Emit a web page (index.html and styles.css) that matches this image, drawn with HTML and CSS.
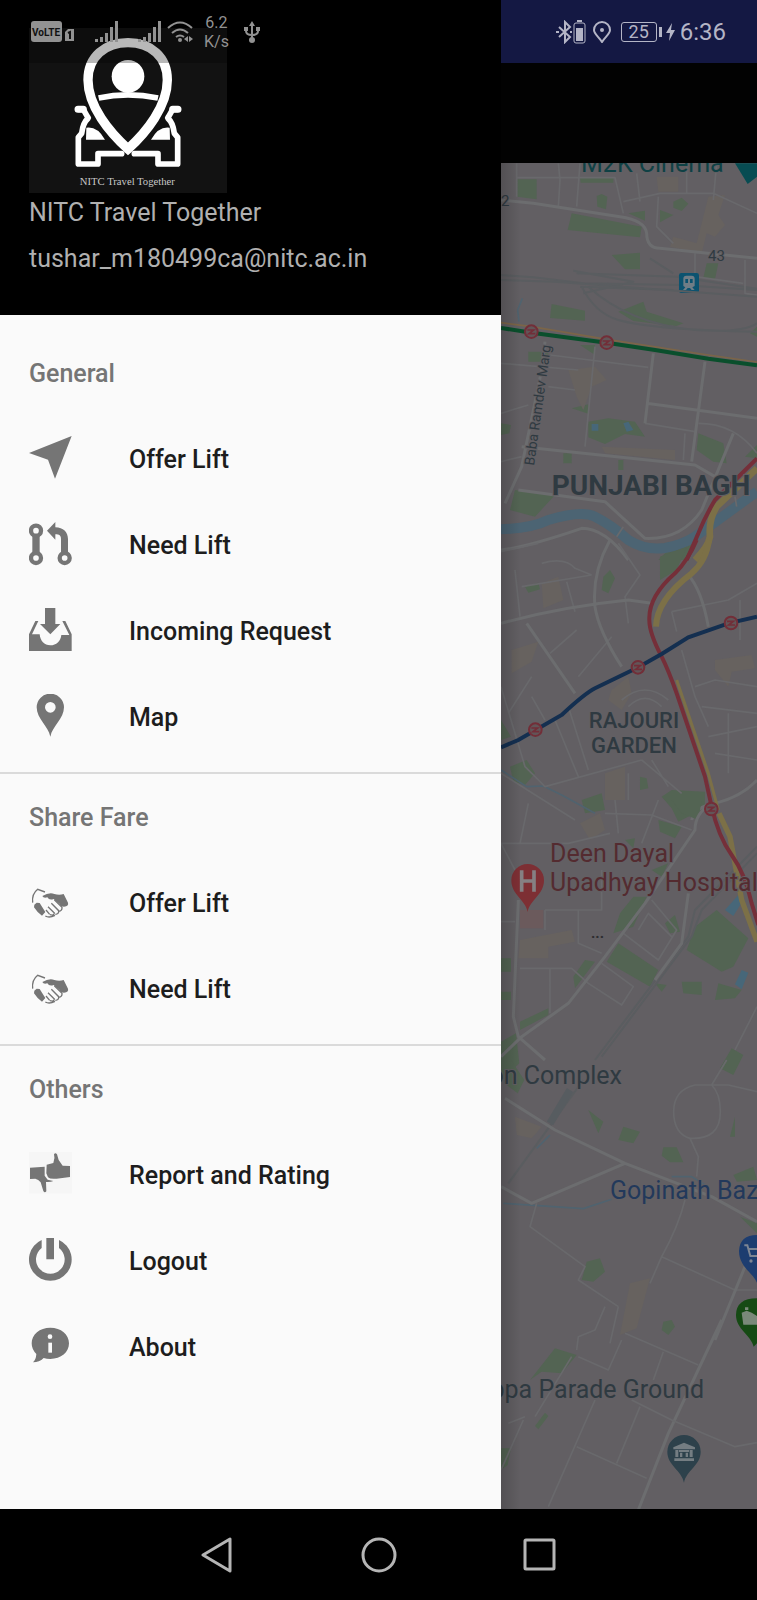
FILE: index.html
```html
<!DOCTYPE html>
<html lang="en">
<head>
<meta charset="utf-8">
<meta name="viewport" content="width=device-width, initial-scale=1">
<title>NITC Travel Together</title>
<link rel="stylesheet" href="styles.css">
</head>
<body>
<div class="screen">
  <aside class="drawer">
    <header class="profile">
      <svg class="logo" viewBox="87 84 594 495" role="img" aria-label="NITC Travel Together logo">
        <rect x="87" y="84" width="594" height="495" fill="#121212"/>
        <g fill="none" stroke="#fff" stroke-linejoin="round" stroke-linecap="round">
          <path d="M296 294Q383 275 474 294" stroke-width="17" stroke-linecap="butt"/>
          <path d="M235 328H250Q262 350 265 354Q249 368 245 400L235 412V492H294V461H365M533 328H518Q506 350 503 354Q519 368 523 400L533 412V492H474V461H403" stroke-width="17"/>
          <path d="M234 328H250M534 328H518" stroke-width="21"/>
          <path d="M384 447C330 398 264 320 264 240C264 170 316 128 384 128S502 170 502 240C502 320 438 398 384 447Z" stroke-width="28" stroke-linejoin="miter"/>
        </g>
        <circle cx="384" cy="229" r="49" fill="#fff"/>
        <path d="M259 383Q292 378 315 419H258ZM509 383Q476 378 453 419H510Z" fill="#fff"/>
        <text x="382" y="556" class="logo-text" text-anchor="middle">NITC Travel Together</text>
      </svg>
      <p class="name">NITC Travel Together</p>
      <p class="email">tushar_m180499ca@nitc.ac.in</p>
    </header>
    <nav class="menu">
      <section class="group">
        <h2 class="group-title">General</h2>
        <a class="item" href="#offer">
          <svg class="icon" viewBox="87 47 129 141"><path d="M87 98L215 47L165 175L144 118Z"/></svg>Offer Lift</a>
        <a class="item" href="#need">
          <svg class="icon" viewBox="87 304 129 141"><path d="M97 345H119V398H97ZM141 330L166 304V320C190 320 204 335 204 355V398H183V355C183 345 178 341 166 341V357Z"/><g class="ring"><circle cx="108" cy="330" r="15"/><circle cx="108" cy="412" r="15"/><circle cx="194" cy="412" r="15"/></g></svg>Need Lift</a>
        <a class="item" href="#incoming">
          <svg class="icon" viewBox="87 561 129 141"><path d="M135 561H166V609H181L151 640L120 609H135ZM87 690V640L106 600H115L96 640H119C121 660 133 673 151 673S182 660 184 642H208L187 600H196L215 640V690Z"/></svg>Incoming Request</a>
        <a class="item" href="#map">
          <svg class="icon" viewBox="87 818 129 141"><path fill-rule="evenodd" d="M151 946C145 915 110 892 110 858A41 41 0 0 1 192 858C192 892 157 915 151 946ZM151 842A16 16 0 1 0 151 874A16 16 0 1 0 151 842Z"/></svg>Map</a>
      </section>
      <section class="group">
        <h2 class="group-title">Share Fare</h2>
        <a class="item" href="#share-offer">
          <svg class="icon" viewBox="87 360 129 141"><g id="shake"><path d="M127 408Q148 396 163 402Q178 407 191 402L204 428Q207 438 192 440Q182 440 178 431L161 417Q148 422 142 412Q130 415 127 408ZM103 434L110 428L119 429L136 456L126 467Q112 458 102 442Z"/><path class="line" d="M98 428Q95 402 113 388L135 396M163 419L186 442Q187 453 176 454M154 430L176 452Q177 463 166 463M144 440L163 459Q162 468 150 464M138 450L149 463M136 468Q148 475 165 466"/></g></svg>Offer Lift</a>
        <a class="item" href="#share-need">
          <svg class="icon" viewBox="87 360 129 141"><use href="#shake"/></svg>Need Lift</a>
      </section>
      <section class="group">
        <h2 class="group-title">Others</h2>
        <a class="item" href="#report">
          <svg class="icon" viewBox="87 281 129 141"><rect class="tile" x="87" y="281" width="129" height="124"/><path d="M90 328L134 325V352L143 364L160 368Q152 372 138 371L139 399Q134 405 130 398L122 372Q115 363 106 361L90 362ZM140 319L160 314Q166 300 162 288Q166 281 171 288L176 305L188 322L210 323V356L170 361Q150 363 144 357L139 345Z"/></svg>Report and Rating</a>
        <a class="item" href="#logout">
          <svg class="icon" viewBox="87 536 129 141"><path d="M139 536H162V600H139ZM177 542A64 64 0 1 1 125 542V566A43 43 0 1 0 177 566Z"/></svg>Logout</a>
        <a class="item" href="#about">
          <svg class="icon" viewBox="87 793 129 141"><path d="M151 804C183 804 207 824 207 851S183 898 151 898Q140 898 131 895Q118 908 99 908Q108 900 109 883Q95 869 95 851C95 824 119 804 151 804Z"/><path class="cut" d="M145 849H156V879H145Z"/><circle class="cut" cx="150" cy="831" r="7"/></svg>About</a>
      </section>
    </nav>
  </aside>

  <main class="app">
    <div class="toolbar"></div>
    <svg class="map" viewBox="501 163 256 1346" preserveAspectRatio="xMinYMin slice" role="img" aria-label="Map">
      <defs>
        <linearGradient id="edge"><stop offset="0" stop-opacity=".16"/><stop offset="1" stop-opacity="0"/></linearGradient>
        <g id="metro"><circle r="19" fill="#625558" stroke="#722e38" stroke-width="6"/><path d="M-12 -5H7L-7 6H12" fill="none" stroke="#722e38" stroke-width="5"/></g>
      </defs>
      <rect class="land" x="501" y="163" width="256" height="1346"/>

      <g transform="translate(500 0) scale(.33333)">
        <path class="park" d="M52 538h58v60l-30-4-28-4zM240 532h100v16h-98zM290 588L305 582 322 590 318 628 292 620zM215 640L425 680 420 712 203 690zM385 640l50-8v30zM335 765l85-7v50h-45zM480 630l40 15-40 22zM520 605l25-12 20 18-20 22-25-10zM620 790h35l-10 48-35-4z"/>
        <path class="built" d="M470 530h65v45h-60zM625 590l50-5-20 60 20 30-30 35-25-10-15 60-95-20 10-30 70 20z"/>
        <path class="rail" d="M0 825L100 832 250 850 540 855 771 870M230 820L530 830 771 866M240 860L520 870M450 775L520 820M220 812L400 845 250 880"/>
        <path class="lane" d="M50 490v100M50 533H345L370 640M240 490L230 620M175 490L180 540 175 620M410 520L420 605M370 605L480 580H640L771 640M475 590L470 680 520 730M735 780V880L771 885M585 760V830L730 850M560 490V580M650 490L640 600"/>
        <path class="road" d="M0 600L100 610 360 650Q435 660 440 700Q440 745 480 745L771 775"/>
        <path fill="#074c52" d="M705 490H771V530L743 552Z"/>
        <rect x="537" y="819" width="60" height="60" rx="7" fill="#0c5370"/>
        <path fill="#707d86" fill-rule="evenodd" d="M550 836Q550 827 559 827H575Q584 827 584 836V858L577 862L584 870H575L570 864H563L558 870H549L556 862L550 858ZM556 837V849H564V837ZM570 837V849H578V837Z"/>
      </g>

      <g transform="translate(495 280) scale(.33333)">
        <path class="park" d="M170 72l100 20v30l-105-8zM370 95l75-30 10 30 110 35-20 8-130-15zM765 160l21-20v30zM255 195h45v30zM100 215h60v30h-60zM230 385l50-12v28zM18 430l30 5-5 25-25 5zM280 425l60-10 80 10 30 45-60-8-60 30-50-20zM610 460l75 30 10 60-40-5-50-35zM750 530l36-35v40zM205 520h25v30h-25zM370 540h15v30h-15zM60 630l120 15-60 65-75-20zM540 790L600 770 575 840H490z"/>
        <path class="built" d="M220 270L300 260 335 300 290 320 265 390 245 350zM320 500l220 10v30l-210-20z"/>
        <path class="lake" d="M385 430l15-5 15 25-20 5zM290 432h20v20h-20z"/>
        <path class="rail" d="M18 0L180 5 786 50M260 20Q300 100 370 120Q480 150 786 155M280 20Q400 130 600 150Q740 160 786 130"/>
        <path class="stream" d="M82 55L68 90 72 125"/>
        <path class="river" d="M18 748Q110 745 160 720Q260 690 300 710Q350 735 400 780Q450 812 510 804Q560 795 600 770L786 635"/>
        <path class="lane" d="M300 200L270 500M165 225L460 262M18 250L250 270M18 400L100 375M18 545L80 530M160 320L240 330M450 430L600 455M570 460L565 540M610 430Q720 430 786 520M385 740L365 770M720 650L725 680"/>
        <path class="road" d="M150 185L140 270 80 560 30 670M80 500L600 555 660 590M475 220L450 430M630 245L590 545M455 370L786 415M70 630L330 665 450 775Q560 780 620 690L715 460M18 810Q100 800 260 745Q330 745 400 840"/>
        <path d="M18 128L110 140 335 178 620 222 786 246" fill="none" stroke="#7b6548" stroke-width="5"/>
        <path d="M18 144L110 158 335 188 480 210 640 236 786 256" fill="none" stroke="#0a4f2c" stroke-width="12"/>
        <use href="#metro" x="109" y="155"/><use href="#metro" x="335" y="188"/>
        <path class="highway" d="M786 565L665 680Q640 720 645 770Q640 800 600 840" stroke-width="20"/>
        <path class="redline" d="M786 535L660 660Q630 710 610 760L575 840"/>
      </g>

      <g transform="translate(495 540) scale(.33333)">
        <path class="park" d="M90 140l40-12 5 20-35 10zM325 110l20-20 15 25-20 45-20-10zM495 50l80-30-30 70-50 30zM18 540l30 50-30 10zM45 680l50-20 25 40-30 35-35-10zM260 780l60-20 10 50-60 10zM435 710l20 5 5 30-25 5zM500 770l30-20 100 5v50l-80 40-20-40zM715 365h20v20h-20z"/>
        <path class="built" d="M140 130l50-20 15 70-60 25zM350 450l50-40 10 50-30 50-40-30zM330 700l60-20v100h-60zM660 360l110-15 10 40-70 10-10 45-40-50zM50 330l80-25-20 60-60 35z"/>
        <path class="stream" d="M18 690L95 740 145 738 200 765 300 820"/>
        <path class="lane" d="M18 35L130 10M60 90L75 230M80 140L290 105M215 125L240 215M140 70Q210 50 240 85L290 105M370 10L435 105 390 170 400 250M165 340L245 270M250 410L350 290M530 215L700 180 786 130M530 215l15 60M735 180V300M560 330L600 470 640 560M600 440L660 420 786 440M620 500L786 520M18 440L90 680 150 740 440 660M18 700L240 840M110 470L150 540M180 540L250 710M220 500L280 690M40 520L110 410M440 660L560 760M400 700v80M380 480Q450 420 520 480M400 500Q450 450 500 500M470 660L520 740M640 590L786 560M660 640L786 660M700 520V700"/>
        <path class="road" d="M345 0Q290 100 300 200Q310 270 380 380M18 250Q200 200 400 180L470 190M95 250L240 460M580 105Q620 150 640 260M590 840Q600 800 660 790Q740 770 786 720"/>
        <path class="highway" d="M642 0Q635 60 590 100Q485 180 483 260" stroke-width="18"/>
        <path class="highway" d="M545 420L640 700 670 810" stroke-width="9"/>
        <path class="redline" d="M605 0Q580 60 540 100Q460 170 463 240Q463 280 500 350Q520 390 545 460L630 710 650 800"/>
        <path d="M18 622L70 600 200 525Q270 460 300 445L430 382 500 342 580 292 700 250 786 230" fill="none" stroke="#142f50" stroke-width="12"/>
        <use href="#metro" x="121" y="569"/><use href="#metro" x="429" y="382"/><use href="#metro" x="708" y="249"/>
      </g>

      <g transform="translate(495 800) scale(.33333)">
        <path class="park" d="M490 60l70 20-20 35-45-20zM530 0h90l-10 60-50-20zM390 120l30-5-5 30zM470 210l50-20-20 40zM415 290h40l-40 90-60 20 20-60zM510 370l30-25 15 50-30 5zM370 430l120 80-25 50-130-75zM600 380L665 330 760 415 715 500 680 515 575 450zM560 545h60v40l-55-5zM670 550l70 20-20 25-60 5zM235 530l35-50 30 5-60 80zM18 475h30v40h-30zM18 575h30v25h-30zM75 665l85-40v20l-85 45zM18 725l45-25 10 90-55 50zM710 745l35 20-30 60-40-20zM480 550l35 5-15 20z"/>
        <path class="built" d="M75 420l155-30 10 35-80 15v35h-90zM255 70l60-30 15 50-45 30z"/>
        <path fill="#6b5a5c" d="M75 330h70v55h-70z"/>
        <path class="lake" d="M690 330L730 285 745 300 715 348zM740 510l20 8-20 50-20-15z"/>
        <path class="rail" d="M786 140L600 330 580 410 300 780M786 160L620 330 590 410 320 770"/>
        <path class="lane" d="M18 130H220L345 100M18 130L60 210M150 330H320V210M250 330V430L320 460M75 505H230L280 550 380 615 415 560 320 490M165 505V640M385 400L490 480 545 390 470 300M430 390l30-50 70 70M18 365H60M150 330V390M100 10L75 130M330 40L470 45 590 90M360 0L370 100M490 0L440 130M786 620L720 750"/>
        <path class="road" d="M18 770L80 710 220 610 330 470 450 310 600 90Q600 40 650 10M70 300L55 650 70 710 150 780M580 280L560 430 480 540"/>
        <path class="highway" d="M672 40L705 110 740 300 786 425" stroke-width="16"/>
        <path class="redline" d="M650 20Q670 110 710 165Q750 220 770 310L790 375"/>
        <use href="#metro" x="649" y="27"/>
        <path fill="#7d2f34" d="M98 336C92 300 49 285 49 241A49 49 0 0 1 147 241C147 285 104 300 98 336Z"/>
        <path d="M80 211V275M117 211V275M80 243H117" stroke="#858083" stroke-width="11"/>
      </g>

      <g transform="translate(495 1060) scale(.33333)">
        <path class="park" d="M280 150l45 35-15 35zM385 200l50 15-20 35-45-10zM505 262h40l20 45h-40l-25-20zM705 230l15-60v60zM715 345l60-25 11 40-60 5zM735 470l51 20v30zM275 605l40-10 15 40-35 30-35-5zM505 785l25-5 10 20-20 25-20-15zM18 0h30l40 60-20 40-40-30z"/>
        <path class="built" d="M60 170l80 30-30 35-45-10zM405 670l60-15-40 150-50 20z"/>
        <path class="rail" d="M265 60L40 370"/>
        <path d="M225 90L165 190" stroke="#575c60" stroke-width="22"/>
        <path class="stream" d="M25 430L265 446 350 418M530 350h60L640 380M125 265L165 225"/>
        <path class="lane" d="M125 430L105 500 270 620 250 660 370 740M570 420Q550 500 500 590L465 670M500 590L720 690H786M585 235Q536 220 536 155T600 75H700L786 95M585 235Q676 240 676 155Q676 100 650 75L695 0M585 235L610 290 605 350M330 740L300 810 250 830 245 870M370 740L345 850"/>
        <path class="road" d="M30 115L180 210 390 310 650 410 786 485M18 380L110 430 390 310M750 620L660 840"/>
        <path fill="#1d3d70" d="M786 668C775 640 732 620 732 573Q734 525 786 525Z"/>
        <path fill="none" stroke="#7d8593" stroke-width="6" d="M748 556H757L766 588H786M762 567H786"/><circle cx="768" cy="603" r="5" fill="#7d8593"/>
        <path fill="#164a14" d="M776 860C768 825 723 808 723 765Q724 715 786 715V850Z"/>
        <path fill="#7a8979" d="M740 758L755 752Q770 756 786 768V794H745ZM750 742h10v8h-10z"/>
      </g>

      <g transform="translate(495 1320) scale(.33333)">
        <path class="park" d="M180 85l65 20-45 55-60-5-35 25zM150 278l10 10-30 40-10-10zM18 385h30l-10 50-20 15z"/>
        <path class="lane" d="M250 110L340 150 380 60M230 110L120 290M300 240L160 560M245 380L455 475M435 260L365 430M505 95L475 180M390 40L610 135M40 310L90 290M85 300L18 450"/>
        <path class="road" d="M680 0L520 340 430 570"/><path class="lane" d="M410 240L530 300 720 380 786 368"/>
        <path fill="#2d414b" d="M567 488C560 450 517 437 517 395A50 50 0 0 1 617 395C617 437 574 450 567 488Z"/>
        <path fill="#747d82" d="M567 368L600 382V388H535V382ZM541 390H550V411H541ZM584 390H593V411H584ZM552 390H582V396H552ZM555 398H562V411H555ZM572 398H579V411H572ZM538 415H597V423H538Z"/>
      </g>

      <g class="labels">
        <text x="581" y="172" class="place" fill="#0f4145">M2K Cinema</text>
        <text x="501" y="206" class="minor">2</text>
        <text x="708" y="261" class="minor">43</text>
        <text transform="translate(534 466) rotate(-82)" class="street">Baba Ramdev Marg</text>
        <text x="651" y="495" class="district" text-anchor="middle">PUNJABI BAGH</text>
        <text x="634" y="728" class="suburb" text-anchor="middle">RAJOURI</text>
        <text x="634" y="753" class="suburb" text-anchor="middle">GARDEN</text>
        <text x="550" y="862" class="place" fill="#542b30">Deen Dayal</text>
        <text x="550" y="891" class="place" fill="#542b30">Upadhyay Hospital</text>
        <text x="591" y="938" class="minor dots">...</text>
        <text x="622" y="1084" class="place" text-anchor="end">on Complex</text>
        <text x="610" y="1199" class="place" fill="#22395b">Gopinath Baz</text>
        <text x="704" y="1398" class="place" text-anchor="end">ppa Parade Ground</text>
      </g>
      <rect x="501" y="163" width="20" height="1346" fill="url(#edge)"/>
    </svg>
  </main>

  <div class="status">
    <div class="status-left">
      <svg class="s-volte" viewBox="0 0 44 22"><rect width="31" height="21" rx="3" fill="#929292"/><text x="15" y="15" text-anchor="middle" class="volte">VoLTE</text><path d="M34 11L37 8H43V20H34Z" fill="#929292"/><path d="M37 12L39 11V18" fill="none" stroke="#111" stroke-width="2"/></svg>
      <svg class="s-signal" viewBox="0 0 24 22"><path d="M0 18h3v3H0zM5 16h3v5H5zM10 12h3v9h-3zM15 6h3v15h-3zM20 0h3v21h-3z"/></svg>
      <svg class="s-signal" viewBox="0 0 24 22"><path d="M0 18h3v3H0zM5 16h3v5H5zM10 12h3v9h-3zM15 6h3v15h-3zM20 0h3v21h-3z"/></svg>
      <svg class="s-wifi" viewBox="0 0 26 22"><path class="stroke" d="M1 7Q13 -4 25 7M5 12Q13 5 21 12M9 16Q13 13 17 16"/><circle cx="13" cy="19" r="2"/><path d="M21 15v6l-4-3zM22 15v6l4-3z"/></svg>
      <span class="rate">6.2<br>K/s</span>
      <svg class="s-usb" viewBox="0 0 16 22"><path class="stroke" d="M8 3V20M2 8V10Q2 14 8 14Q14 14 14 10V8"/><path d="M8 0L11 5H5ZM0 6h4v4H0zM12 6h4v4h-4z"/><circle cx="8" cy="19" r="3"/></svg>
    </div>
    <div class="status-right">
      <svg class="s-bt" viewBox="0 0 30 24"><path class="stroke" d="M3 7L14 17L9 22V2L14 7L3 17"/><path d="M0 11h3v2H0zM14 11h2v2h-2zM21 0h5v2h-5zM20 8h7v13h-7z"/><rect x="18" y="3" width="11" height="20" rx="2" fill="none" stroke="#b4b5c6"/></svg>
      <svg class="s-pin" viewBox="0 0 18 22"><path class="stroke" d="M9 21C6 16 1 13 1 9A8 8 0 0 1 17 9C17 13 12 16 9 21Z"/><circle cx="9" cy="9" r="2"/></svg>
      <span class="battery">25</span>
      <svg class="s-bolt" viewBox="0 0 9 18"><path d="M6 0L0 10H4L3 18L9 7H5Z"/></svg>
      <time class="clock">6:36</time>
    </div>
  </div>
</div>
<footer class="navbar">
  <button class="key" aria-label="Back"><svg viewBox="0 0 36 36"><path d="M30 2V34L3 18Z"/></svg></button>
  <button class="key" aria-label="Home"><svg viewBox="0 0 36 36"><circle cx="18" cy="18" r="16"/></svg></button>
  <button class="key" aria-label="Recent apps"><svg viewBox="0 0 36 36"><rect x="3" y="3" width="29" height="29" rx="1"/></svg></button>
</footer>
</body>
</html>
```
FILE: styles.css
```css
* {
  box-sizing: border-box;
}

body {
  margin: 0;
  min-height: 100vh;
  display: flex;
  flex-direction: column;
  background: #000;
  font-family: Roboto, "Liberation Sans", sans-serif;
  font-size: 25px;
}

.screen {
  position: relative;
  flex: 1;
  display: grid;
  grid-template-columns: minmax(0, 501px) minmax(0, 1fr);
}

/* Drawer */
.drawer {
  background: #fafafa;
}

.profile {
  padding: 28px 29px 40px;
  background: #000;
  color: #b0b0b0;
}

.logo {
  display: block;
  width: 198px;
  height: 165px;
}

.logo-text {
  font: 32px "Liberation Serif", serif;
  fill: #c8c8c8;
}

.name,
.email {
  margin: 4px 0 0;
  line-height: 32px;
}

.email {
  margin-top: 14px;
}

.menu {
  padding-top: 15px;
}

.group {
  padding-bottom: 12px;
}

.group + .group {
  border-top: 2px solid #dadada;
}

.group-title {
  margin: 0;
  padding: 2px 29px 0;
  font-size: 25px;
  font-weight: 500;
  line-height: 84px;
  color: #757575;
}

.item {
  display: flex;
  align-items: center;
  gap: 57px;
  height: 86px;
  padding: 0 29px;
  font-weight: 500;
  color: #1d1d1d;
  text-decoration: none;
}

.icon {
  width: 43px;
  height: 47px;
  flex: none;
  fill: #757575;
}

.icon .ring {
  fill: #fafafa;
  stroke: #757575;
  stroke-width: 13px;
}

.icon .line {
  fill: none;
  stroke: #757575;
  stroke-width: 4px;
}

.icon .tile {
  fill: #f6f6f6;
}

.icon .cut {
  fill: #fafafa;
}

/* Dimmed app behind the drawer */
.app {
  display: flex;
  flex-direction: column;
  min-width: 0;
  background: #020202;
}

.toolbar {
  height: 163px;
  flex: none;
  border-top: 63px solid #141843;
}

.map {
  display: block;
  width: 100%;
  flex: 1;
  min-height: 0;
}

.land { fill: #625f63; }
.park { fill: #536453; }
.built { fill: #67625f; }
.lake { fill: #476779; }

.road,
.lane,
.rail,
.river,
.stream,
.highway,
.redline {
  fill: none;
  stroke-linejoin: round;
}

.road { stroke: #6c6d6f; stroke-width: 9px; }
.lane { stroke: #69696c; stroke-width: 5px; }
.rail { stroke: #5a5d60; stroke-width: 6px; }
.river { stroke: #4c6473; stroke-width: 30px; }
.stream { stroke: #50636f; stroke-width: 5px; }
.highway { stroke: #7c7047; }
.redline { stroke: #752f39; stroke-width: 12px; }

.labels {
  fill: #2f3a41;
  stroke: #625f63;
  stroke-width: 2px;
  paint-order: stroke;
}

.place { font-size: 25px; }
.minor { font-size: 15px; }
.street { font-size: 14px; }
.district { font-size: 28px; font-weight: 700; }
.suburb { font-size: 22px; font-weight: 500; }
.dots { font-weight: 700; fill: #2d2d30; }

/* Status bar */
.status {
  position: absolute;
  inset: 0 0 auto;
  height: 63px;
  display: flex;
  justify-content: space-between;
  align-items: center;
  padding: 0 31px;
  background: linear-gradient(90deg, rgba(0, 0, 0, 0.28) 501px, transparent 501px);
}

.status-left,
.status-right {
  display: flex;
  align-items: center;
}

.status-left { fill: #929292; color: #929292; }
.status-right { fill: #b4b5c6; color: #b4b5c6; }

.status .stroke {
  fill: none;
  stroke: currentColor;
  stroke-width: 2px;
}

.s-volte { width: 44px; height: 22px; margin-right: 20px; }
.s-signal { width: 24px; height: 22px; margin-right: 19px; }
.s-signal + .s-wifi { margin-left: -14px; }
.s-wifi { width: 26px; height: 22px; }
.s-usb { width: 16px; height: 22px; }

.volte {
  font: 700 10px Roboto, sans-serif;
  fill: #111;
}

.rate {
  margin: 0 15px 0 11px;
  font-size: 16px;
  line-height: 19px;
  text-align: center;
}

.s-bt { width: 30px; height: 24px; margin-right: 7px; }
.s-pin { width: 18px; height: 22px; margin-right: 10px; }
.s-bolt { width: 9px; height: 18px; margin: 0 5px 0 9px; }

.battery {
  position: relative;
  width: 36px;
  border: 1px solid currentColor;
  border-radius: 3px;
  font-size: 18px;
  line-height: 18px;
  text-align: center;
}

.battery::after {
  content: "";
  position: absolute;
  top: 4px;
  right: -6px;
  width: 3px;
  height: 10px;
  background: currentColor;
}

.clock {
  font-size: 24px;
}

/* System navigation */
.navbar {
  display: flex;
  justify-content: center;
  align-items: center;
  gap: 113px;
  height: 91px;
  flex: none;
}

.key {
  display: grid;
  place-items: center;
  width: 48px;
  height: 48px;
  padding: 0;
  border: 0;
  background: none;
}

.key svg {
  width: 36px;
  height: 36px;
  fill: none;
  stroke: #b5b5b5;
  stroke-width: 3px;
  stroke-linejoin: round;
}
```
